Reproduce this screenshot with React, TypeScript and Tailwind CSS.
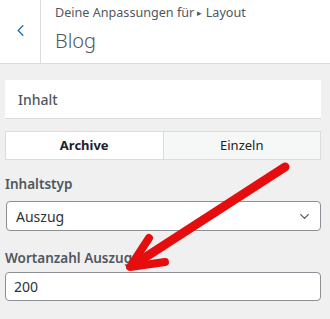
import { ChevronLeft, ChevronDown } from 'lucide-react';

export default function App() {
  return (
    <div className="relative w-[330px] h-[319px] overflow-hidden bg-[#f0f0f1] text-[#50575e] font-['Noto_Sans',sans-serif]">
      {/* Header */}
      <div className="flex h-16 bg-white border-b border-[#dcdcde]">
        <button className="w-[41px] flex items-center justify-center border-r border-[#dcdcde]">
          <ChevronLeft size={19} strokeWidth={1.75} className="text-[#2271b1] -mt-[2px]" />
        </button>
        <div className="pl-[14px] pt-[4px]">
          <div className="text-[12.6px] leading-[18px]">
            Deine Anpassungen für <span className="text-[9px] align-[1px]">▸</span> Layout
          </div>
          <div className="mt-[6px] text-[20px] leading-[26px] font-light">Blog</div>
        </div>
      </div>

      {/* Section */}
      <div className="pl-[5px] pr-[9px]">
        <div className="mt-4 h-[39px] bg-white border-b border-[#dcdcde] pl-[13px] flex items-center text-[14px] font-medium">
          Inhalt
        </div>

        <div className="mt-[12px] flex h-[29px] border border-[#dcdcde] text-[13px] text-[#1d2327]">
          <div className="flex-1 bg-white font-bold flex items-center justify-center border-r border-[#dcdcde]">
            Archive
          </div>
          <div className="flex-1 bg-[#f6f7f7] flex items-center justify-center">Einzeln</div>
        </div>

        <div className="mt-[14px] text-[13.5px] leading-[20px] font-semibold">Inhaltstyp</div>
        <div className="mt-[7px] ml-px h-[30px] flex items-center justify-between bg-white border border-[#8c8f94] rounded-[4px] pl-[9px] pr-[8px] text-[14px] text-[#2c3338]">
          <span>Auszug</span>
          <ChevronDown size={15} strokeWidth={2} className="text-[#50575e]" />
        </div>

        <div className="mt-[17px] text-[13.5px] leading-[20px] font-semibold">Wortanzahl Auszug</div>
        <div className="mt-[4px] h-[29px] flex items-center bg-white border border-[#8c8f94] rounded-[4px] pl-[8px] text-[14px] text-[#2c3338]">
          200
        </div>
      </div>

      {/* Annotation arrow */}
      <svg className="absolute left-0 top-0 pointer-events-none" width="330" height="319" viewBox="0 0 330 319">
        <line x1="285" y1="167" x2="138" y2="262" stroke="#e50d0d" strokeWidth="9" strokeLinecap="round" />
        <path d="M149 238 L130 267 L165 262" fill="none" stroke="#e50d0d" strokeWidth="8" strokeLinecap="round" strokeLinejoin="round" />
      </svg>
    </div>
  );
}
